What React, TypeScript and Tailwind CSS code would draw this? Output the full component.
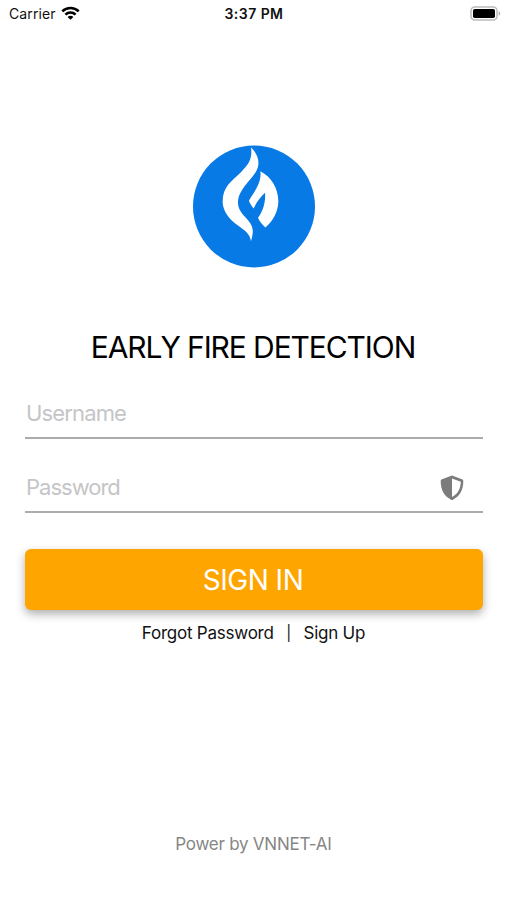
import { useState, FormEvent } from "react";

function StatusBar() {
    return (
        <div className="grid h-[26px] w-full grid-cols-3 items-center pl-[9px] pr-[6px] text-[14px] text-[#111]">
            <div className="flex items-center gap-[5px]">
                <span className="tracking-[0.1px]">Carrier</span>
                <svg className="h-[14px] w-[19px]" viewBox="0 0 19 14" fill="none" stroke="#000" strokeWidth="2.6">
                    <path d="M1.3 5.4C5.9.9 13.1.9 17.7 5.4" />
                    <path d="M4.4 8.6c2.9-2.8 7.3-2.8 10.2 0" />
                    <path d="M9.5 13.8 6.6 10.9c1.6-1.5 4.2-1.5 5.8 0z" fill="#000" stroke="none" />
                </svg>
            </div>
            <span className="pr-[2px] text-center font-semibold tracking-[0.45px]">3:37 PM</span>
            <svg className="h-[15px] w-[31px] justify-self-end" viewBox="0 0 31 15">
                <rect x="1" y="1" width="26" height="13" rx="3.8" fill="#fff" stroke="#bcbcbc" strokeWidth="1.5" />
                <rect x="3" y="3" width="22" height="9" rx="1.8" fill="#000" />
                <path d="M28.6 5.3c2 .7 2 3.7 0 4.4z" fill="#aaa" />
            </svg>
        </div>
    );
}

function Logo() {
    return (
        <svg className="h-[123px] w-[122px]" viewBox="15 14.5 366 369">
            <circle cx="198" cy="199" r="183" fill="#087ae6" />
            <g fill="#fff">
                <path d="M189 22C206 38 213 56 211 74C208 110 150 140 150 188C150 228 200 240 194 279C193 288 191 295 189 303C185 270 150 262 125 234C112 219 104 202 104 184C104 140 130 124 158 97C180 75 194 58 189 22Z" />
                <path d="M217 93C251 110 271 146 271 183C271 216 252 246 232 262C223 254 215 244 210 233C222 216 234 190 231 158C220 168 206 184 197 205C191 198 186 191 183 182C190 165 223 132 217 93Z" />
            </g>
        </svg>
    );
}

function ShieldIcon() {
    return (
        <svg className="h-[26px] w-[24px]" viewBox="0 0 24 26">
            <path
                d="M12 .5 22 4.2C22.8 4.5 23.3 5.2 23.3 6.1C23.3 15 19.8 21.4 12.6 24.9Q12 25.2 11.4 24.9C4.2 21.4.7 15 .7 6.1C.7 5.2 1.2 4.5 2 4.2ZM12 3.5V22.1C18 18.8 20.6 13.6 20.8 6.7Z"
                fill="#7c7c7c"
                fillRule="evenodd"
            />
        </svg>
    );
}

export default function App() {
    const [username, setUsername] = useState("");
    const [password, setPassword] = useState("");

    const handleSubmit = (event: FormEvent<HTMLFormElement>) => {
        event.preventDefault();
    };

    return (
        <div className="flex h-[900px] w-full flex-col items-center bg-white font-[Inter,sans-serif] text-[#111]">
            <StatusBar />

            <div className="mt-[119px] pl-px">
                <Logo />
            </div>

            <h1 className="mt-[59px] pr-px text-[30px] leading-10 tracking-[-1.1px] whitespace-nowrap text-black">
                EARLY FIRE DETECTION
            </h1>

            <form className="flex w-full flex-col pr-[24px] pl-[25px]" onSubmit={handleSubmit}>
                <div className="mt-[23px] flex h-[49px] items-center border-b-2 border-[#ababab] pl-px">
                    <input
                        className="w-full text-[22px] tracking-[-0.85px] outline-none placeholder:text-[#c5c5c7]"
                        placeholder="Username"
                        value={username}
                        onChange={(event) => setUsername(event.target.value)}
                    />
                </div>
                <div className="mt-[25px] flex h-[49px] items-center border-b-2 border-[#ababab] pr-[19px] pl-px">
                    <input
                        className="min-w-0 flex-1 text-[22px] tracking-[-1px] outline-none placeholder:text-[#c5c5c7]"
                        type="password"
                        placeholder="Password"
                        value={password}
                        onChange={(event) => setPassword(event.target.value)}
                    />
                    <ShieldIcon />
                </div>
                <button
                    className="mt-[36px] h-[61px] rounded-md bg-[#ffa500] pr-[2px] text-[28px] tracking-[-0.5px] text-white shadow-[0_4px_10px_rgba(0,0,0,0.32)]"
                    type="submit"
                >
                    SIGN IN
                </button>
            </form>

            <div className="mt-[11px] flex items-center gap-[12.5px] text-[17px] leading-6 tracking-[-0.23px]">
                <a href="#">Forgot Password</a>
                <span className="text-[15px]">|</span>
                <a href="#">Sign Up</a>
            </div>

            <p className="mt-auto mb-11 text-[17px] leading-6 tracking-[-0.25px] text-[#868686]">Power by VNNET-AI</p>
        </div>
    );
}
